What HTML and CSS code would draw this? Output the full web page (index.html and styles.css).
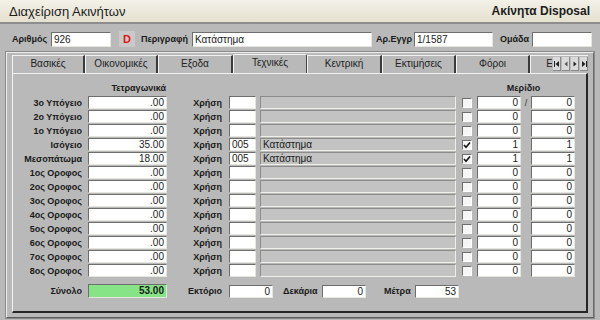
FILE: index.html
```html
<!DOCTYPE html>
<html lang="el">
<head>
    <meta charset="UTF-8">
    <title>Διαχείριση Ακινήτων</title>
    <link rel="stylesheet" href="styles.css">
</head>
<body>
    <header class="titlebar">
        <span>Διαχείριση Ακινήτων</span>
        <span class="title-right">Ακίνητα Disposal</span>
    </header>

    <div class="toprow">
        <span class="lbl w-arithmos">Αριθμός</span>
        <div class="fld w60">926</div>
        <div class="dbox">D</div>
        <span class="lbl w-perigrafi">Περιγραφή</span>
        <div class="fld w180">Κατάστημα</div>
        <span class="lbl w-aregr">Αρ.Εγγρ</span>
        <div class="fld w79">1/1587</div>
        <span class="lbl w-omada">Ομάδα</span>
        <div class="fld w60"></div>
    </div>

    <div class="frame">
        <div class="tabs">
            <div class="tab t73">Βασικές</div>
            <div class="tab t73">Οικονομικές</div>
            <div class="tab t75">Εξοδα</div>
            <div class="tab t74 active">Τεχνικές</div>
            <div class="tab t75">Κεντρική</div>
            <div class="tab t74">Εκτιμήσεις</div>
            <div class="tab t74">Φόροι</div>
            <div class="tab t74">Εγγραφα</div>
            <div class="tabnav">
                <span class="navbtn"><svg width="8" height="8" viewBox="0 0 8 8"><rect x="1" y="1" width="1" height="6" fill="#222"/><path d="M6 1 L2.5 4 L6 7 Z" fill="#222"/></svg></span>
                <span class="navbtn"><svg width="8" height="8" viewBox="0 0 8 8"><path d="M5.5 1.5 L2.5 4 L5.5 6.5 Z" fill="#555"/></svg></span>
                <span class="navbtn"><svg width="8" height="8" viewBox="0 0 8 8"><path d="M2.5 1.5 L5.5 4 L2.5 6.5 Z" fill="#222"/></svg></span>
                <span class="navbtn"><svg width="8" height="8" viewBox="0 0 8 8"><path d="M2 1 L5.5 4 L2 7 Z" fill="#222"/><rect x="6" y="1" width="1" height="6" fill="#222"/></svg></span>
            </div>
        </div>

        <div class="page">
            <div class="grid">
                <!-- επικεφαλίδες -->
                <div></div>
                <div class="head head-sqm">Τετραγωνικά</div>
                <div></div><div></div><div></div><div></div>
                <div class="head head-share">Μερίδιο</div>

                <div class="lbl">3ο Υπόγειο</div>
                <div class="fld num w79">.00</div>
                <div class="lbl">Χρήση</div>
                <div class="fld w27"></div>
                <div class="fld off w196"></div>
                <div class="chk"></div>
                <div class="fld num w44">0</div>
                <div class="slash">/</div>
                <div class="fld num w44">0</div>

                <div class="lbl">2ο Υπόγειο</div>
                <div class="fld num w79">.00</div>
                <div class="lbl">Χρήση</div>
                <div class="fld w27"></div>
                <div class="fld off w196"></div>
                <div class="chk"></div>
                <div class="fld num w44">0</div>
                <div class="slash"></div>
                <div class="fld num w44">0</div>

                <div class="lbl">1ο Υπόγειο</div>
                <div class="fld num w79">.00</div>
                <div class="lbl">Χρήση</div>
                <div class="fld w27"></div>
                <div class="fld off w196"></div>
                <div class="chk"></div>
                <div class="fld num w44">0</div>
                <div class="slash"></div>
                <div class="fld num w44">0</div>

                <div class="lbl">Ισόγειο</div>
                <div class="fld num w79">35.00</div>
                <div class="lbl">Χρήση</div>
                <div class="fld w27">005</div>
                <div class="fld off w196">Κατάστημα</div>
                <div class="chk"><svg width="8" height="8" viewBox="0 0 8 8"><path d="M1 4 L3 6.2 L7 1.5" fill="none" stroke="#111" stroke-width="1.6"/></svg></div>
                <div class="fld num w44">1</div>
                <div class="slash"></div>
                <div class="fld num w44">1</div>

                <div class="lbl">Μεσοπάτωμα</div>
                <div class="fld num w79">18.00</div>
                <div class="lbl">Χρήση</div>
                <div class="fld w27">005</div>
                <div class="fld off w196">Κατάστημα</div>
                <div class="chk"><svg width="8" height="8" viewBox="0 0 8 8"><path d="M1 4 L3 6.2 L7 1.5" fill="none" stroke="#111" stroke-width="1.6"/></svg></div>
                <div class="fld num w44">1</div>
                <div class="slash"></div>
                <div class="fld num w44">1</div>

                <div class="lbl">1ος Οροφος</div>
                <div class="fld num w79">.00</div>
                <div class="lbl">Χρήση</div>
                <div class="fld w27"></div>
                <div class="fld off w196"></div>
                <div class="chk"></div>
                <div class="fld num w44">0</div>
                <div class="slash"></div>
                <div class="fld num w44">0</div>

                <div class="lbl">2ος Οροφος</div>
                <div class="fld num w79">.00</div>
                <div class="lbl">Χρήση</div>
                <div class="fld w27"></div>
                <div class="fld off w196"></div>
                <div class="chk"></div>
                <div class="fld num w44">0</div>
                <div class="slash"></div>
                <div class="fld num w44">0</div>

                <div class="lbl">3ος Οροφος</div>
                <div class="fld num w79">.00</div>
                <div class="lbl">Χρήση</div>
                <div class="fld w27"></div>
                <div class="fld off w196"></div>
                <div class="chk"></div>
                <div class="fld num w44">0</div>
                <div class="slash"></div>
                <div class="fld num w44">0</div>

                <div class="lbl">4ος Οροφος</div>
                <div class="fld num w79">.00</div>
                <div class="lbl">Χρήση</div>
                <div class="fld w27"></div>
                <div class="fld off w196"></div>
                <div class="chk"></div>
                <div class="fld num w44">0</div>
                <div class="slash"></div>
                <div class="fld num w44">0</div>

                <div class="lbl">5ος Οροφος</div>
                <div class="fld num w79">.00</div>
                <div class="lbl">Χρήση</div>
                <div class="fld w27"></div>
                <div class="fld off w196"></div>
                <div class="chk"></div>
                <div class="fld num w44">0</div>
                <div class="slash"></div>
                <div class="fld num w44">0</div>

                <div class="lbl">6ος Οροφος</div>
                <div class="fld num w79">.00</div>
                <div class="lbl">Χρήση</div>
                <div class="fld w27"></div>
                <div class="fld off w196"></div>
                <div class="chk"></div>
                <div class="fld num w44">0</div>
                <div class="slash"></div>
                <div class="fld num w44">0</div>

                <div class="lbl">7ος Οροφος</div>
                <div class="fld num w79">.00</div>
                <div class="lbl">Χρήση</div>
                <div class="fld w27"></div>
                <div class="fld off w196"></div>
                <div class="chk"></div>
                <div class="fld num w44">0</div>
                <div class="slash"></div>
                <div class="fld num w44">0</div>

                <div class="lbl">8ος Οροφος</div>
                <div class="fld num w79">.00</div>
                <div class="lbl">Χρήση</div>
                <div class="fld w27"></div>
                <div class="fld off w196"></div>
                <div class="chk"></div>
                <div class="fld num w44">0</div>
                <div class="slash"></div>
                <div class="fld num w44">0</div>
            </div>

            <div class="totals">
                <div class="lbl">Σύνολο</div>
                <div class="fld num w79 total">53.00</div>
                <div class="lbl">Εκτόριο</div>
                <div class="extra">
                    <div class="fld num w44">0</div>
                    <span class="lbl w-dekaria">Δεκάρια</span>
                    <div class="fld num w44">0</div>
                    <span class="lbl w-metra">Μέτρα</span>
                    <div class="fld num w44">53</div>
                </div>
            </div>
        </div>
    </div>
</body>
</html>
```

FILE: styles.css
```css
body {
    margin: 0;
    width: 600px;
    height: 320px;
    overflow: hidden;
    background-color: #b9b9b9;
    font-family: 'Liberation Sans', Arial, sans-serif;
    color: #1c1c1c;
}

.titlebar {
    height: 22px;
    display: flex;
    justify-content: space-between;
    align-items: center;
    padding: 0 10px 0 9px;
    background: linear-gradient(#f3f1e8, #e5e1d0);
    border-bottom: 2px solid #8e8e8e;
    font-size: 13px;
}
.title-right {
    font-weight: bold;
    font-size: 12px;
}

/* γραμμή με τα βασικά στοιχεία */
.toprow {
    display: flex;
    align-items: center;
    padding: 7px 0 5px 12px;
}
.toprow .fld {
    height: 15px;
    line-height: 13px;
}
.w-arithmos { width: 39px; }
.w-perigrafi { width: 51px; margin-left: 6px; }
.w-aregr { width: 38px; margin-left: 4px; }
.w-omada { width: 32px; margin-left: 7px; }
.dbox {
    width: 16px;
    height: 16px;
    margin-left: 8px;
    background-color: #c9c9c9;
    color: #e01414;
    font-weight: bold;
    font-size: 11px;
    text-align: center;
    line-height: 16px;
}

.lbl {
    font-size: 9px;
    font-weight: bold;
    color: #1a1a1a;
    white-space: nowrap;
}

.fld {
    box-sizing: border-box;
    height: 13px;
    background-color: #fff;
    border: 1px solid;
    border-color: #6e6e6e #e6e6de #e6e6de #6e6e6e;
    font-size: 10px;
    line-height: 11px;
    padding: 0 2px;
    white-space: nowrap;
    overflow: hidden;
}
.fld.num { text-align: right; }
.fld.off {
    background-color: #c3c3c3;
    border-color: #8c8c8c #efefe7 #efefe7 #8c8c8c;
}
.fld.total {
    background-color: #86e486;
    font-weight: bold;
    height: 14px;
    line-height: 12px;
}
.w27 { width: 27px; }
.w44 { width: 44px; }
.w60 { width: 60px; }
.w79 { width: 79px; }
.w180 { width: 180px; }
.w196 { width: 196px; }

/* πλαίσιο καρτελών */
.frame {
    margin: 0 6px;
    height: 263px;
    padding: 1px 5px 0 5px;
    border: 1px solid;
    border-color: #ececec #6a6a6a #5a5a5a #ececec;
    box-shadow: 0 0 0 1px #8a8a8a;
}

.tabs {
    position: relative;
    display: flex;
    height: 19px;
    overflow: hidden;
    font-size: 10px;
}
.tab {
    flex: none;
    box-sizing: border-box;
    height: 18px;
    margin-top: 1px;
    text-align: center;
    line-height: 16px;
    color: #222;
    border-top: 1px solid #f2f2f2;
    border-left: 1px solid #f2f2f2;
    border-right: 2px solid #3a3a3a;
}
.t73 { width: 73px; }
.t74 { width: 74px; }
.t75 { width: 75px; }
.tab.active {
    height: 20px;
    margin-top: 0;
    border: 1px solid #f4f4f4;
    border-right: 1px solid #444;
    border-bottom: none;
    border-radius: 2px 2px 0 0;
    position: relative;
    z-index: 1;
    background-color: #b9b9b9;
}
.tabnav {
    position: absolute;
    right: 0;
    top: 3px;
    display: flex;
    gap: 1px;
    background-color: #b9b9b9;
    padding-left: 1px;
}
.navbtn {
    width: 8px;
    height: 14px;
    display: flex;
    align-items: center;
    justify-content: center;
    background-color: #dadada;
    box-shadow: inset -1px -1px #8a8a8a;
}

.page {
    height: 224px;
    padding: 7px 0 6px 0;
    border-top: 1px solid #f2f2f2;
    border-left: 1px solid #f2f2f2;
    border-right: 2px solid #262626;
    border-bottom: 2px solid #262626;
}

.grid {
    display: grid;
    grid-template-columns: 69px 85px 55px 34px 200px 16px 49px 10px 44px;
    grid-template-rows: 14px;
    grid-auto-rows: 13px;
    row-gap: 1px;
    align-items: center;
}
.grid > .lbl { text-align: right; }
.grid > .fld { justify-self: end; }
.head {
    font-size: 9px;
    font-weight: bold;
    white-space: nowrap;
}
.head-sqm {
    justify-self: end;
    padding-right: 1px;
}
.head-share {
    grid-column: span 3;
    text-align: center;
}
.chk {
    justify-self: end;
    box-sizing: border-box;
    width: 10px;
    height: 10px;
    background-color: #f6f6f6;
    border: 1px solid;
    border-color: #6e6e6e #fff #fff #6e6e6e;
    display: flex;
    align-items: center;
    justify-content: center;
}
.slash {
    font-size: 9px;
    text-align: center;
    color: #333;
}

.totals {
    display: grid;
    grid-template-columns: 69px 85px 55px auto;
    align-items: center;
    margin-top: 7px;
    height: 14px;
}
.totals > .lbl { text-align: right; }
.totals > .fld { justify-self: end; }
.extra {
    display: flex;
    align-items: center;
    padding-left: 7px;
}
.w-dekaria { width: 35px; margin-left: 10px; margin-right: 4px; }
.w-metra { width: 27px; margin-left: 18px; margin-right: 4px; }
```
